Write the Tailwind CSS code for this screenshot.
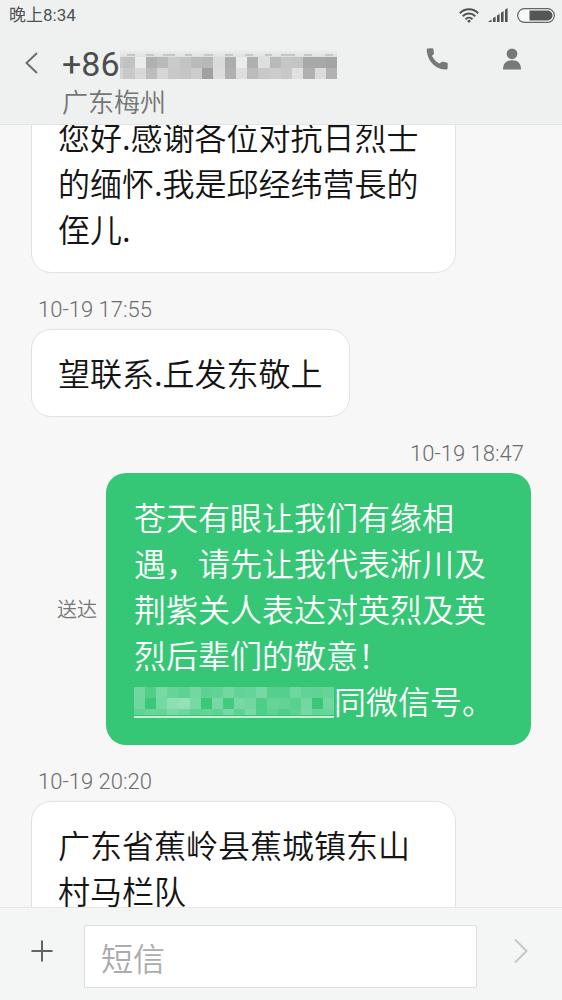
<!DOCTYPE html>
<html lang="zh-CN">
<head>
<meta charset="utf-8">
<meta name="viewport" content="width=device-width, initial-scale=1">
<title>短信</title>
<script src="https://cdn.jsdelivr.net/npm/@tailwindcss/browser@4"></script>
</head>
<body class="flex h-screen flex-col overflow-hidden bg-[#f7f7f7] font-['Noto_Sans_CJK_SC',sans-serif] font-[350] text-[#141414]">
<header class="shrink-0 border-b border-[#e4e5e5] bg-[#eff1f1]">
  <div class="flex h-[30px] items-center justify-between pr-[7px] pl-[9px] text-[#505252]">
    <span class="font-[Roboto,'Noto_Sans_CJK_SC',sans-serif] text-[17px] leading-[30px] font-normal">晚上8:34</span>
    <div class="flex items-center gap-[9px]">
      <svg class="h-[15px] w-[20px]" viewBox="0 0 20 15" fill="none" stroke="#505252" stroke-width="2" aria-label="Wi-Fi"><path d="M.8 5.2C5.8-.2 14.2-.2 19.2 5.2M3.7 8.2c3.5-3.6 9.1-3.6 12.6 0M6.5 11.2c2-2 5-2 7 0"/><circle cx="10" cy="13.2" r="1.4" fill="#505252" stroke="none"/></svg>
      <svg class="h-[14px] w-[20px]" viewBox="0 0 20 14" fill="#505252" aria-label="信号"><path d="M0 14l3.6-2.6V14zM5 10.2l2.6-1.6V14H5zM9 7.6L11.6 6v8H9zM13 4.7L15.6 3v11H13zM17 1.7L19.6 0v14H17z"/></svg>
      <svg class="h-[15px] w-[38px]" viewBox="0 0 38 15" aria-label="电量"><rect x=".7" y=".7" width="36.6" height="13.6" rx="6.8" fill="#f7f8f8" stroke="#626464" stroke-width="1.2"/><path d="M12.5 2.5H30.5a5 5 0 0 1 0 10H12.5z" fill="#555757"/></svg>
    </div>
  </div>
  <div class="flex h-[94px] items-start pr-[40px] pl-[24px]">
    <button class="mt-[20px] mr-[23px] flex h-[26px] w-[15px] items-center" aria-label="返回"><svg class="h-[22px] w-[15px]" viewBox="0 0 15 22" fill="none" stroke="#6c6e6e" stroke-width="2"><path d="M13 1L2.5 11 13 21"/></svg></button>
    <div class="flex-1 pt-[14px]">
      <h1 class="flex h-[40px] items-center font-[Roboto,'Noto_Sans_CJK_SC',sans-serif] text-[34px] leading-[40px] font-normal text-[#4c4e4e]">+86<svg class="h-[31px] w-[217px]" viewBox="0 0 217 31" shape-rendering="crispEdges" aria-label="号码已隐藏">
        <defs><linearGradient id="fade" x1="0" y1="0" x2="0" y2="1"><stop offset="0" stop-color="#eff1f1"/><stop offset="1" stop-color="#dcdddd"/></linearGradient></defs>
        <rect x="0" y="0" width="217" height="9" fill="url(#fade)"/>
        <g fill="#c6c7c7"><rect x="7" y="5" width="8" height="2"/><rect x="26" y="5" width="8" height="2"/><rect x="43" y="5" width="12" height="2"/><rect x="65" y="5" width="7" height="2"/><rect x="84" y="5" width="9" height="2"/><rect x="105" y="5" width="8" height="2"/><rect x="125" y="5" width="8" height="2"/><rect x="145" y="5" width="7" height="2"/><rect x="161" y="5" width="14" height="2"/><rect x="184" y="5" width="8" height="2"/><rect x="205" y="5" width="8" height="2"/></g>
        <g id="mosaic-header"></g>
      </svg></h1>
      <p class="text-[26px] leading-[34px] text-[#747676]">广东梅州</p>
    </div>
    <button class="mt-[18px] mr-[54px]" aria-label="拨打电话"><svg class="h-[22px] w-[22px]" viewBox="0 0 22 22" fill="#777979"><path d="M.8 1.4Q.8.6 1.6.5L6.2.2Q7.200.2 7.4 1.200L8 5.3Q8 6 7.3 6.500L6 7.700C7.200 10.800 10.600 14.300 13.800 15.600L15.200 14.200Q15.700 13.700 16.400 13.800L20.800 14.400Q21.700 14.600 21.700 15.600V20.200Q21.600 21.300 20.500 21.400C9.500 22.200.6 12 .8 1.400z"/></svg></button>
    <button class="mt-[18px]" aria-label="联系人"><svg class="h-[22px] w-[20px]" viewBox="0 0 20 22" fill="#777979"><circle cx="10" cy="5.8" r="5.4"/><path d="M1 21.500C1 15.500 4 12.300 10 12.300s9 3.200 9 9.200z"/></svg></button>
  </div>
</header>

<main class="min-h-0 flex-1 overflow-hidden px-[31px]">
  <ol class="-mt-[32px] flex flex-col gap-[23px] text-[32px] leading-[46px]">
    <li class="flex">
      <p class="max-w-[85%] rounded-[20px] border border-[#e2e2e2] bg-white px-[26px] pt-[19px] pb-[21px]">您好.感谢各位对抗日烈士的缅怀.我是邱经纬营長的侄儿.</p>
    </li>
    <li class="flex flex-col items-start gap-[5px]">
      <time class="px-[7px] font-[Roboto,sans-serif] text-[22px] leading-[28px] text-[#6c6c6c]">10-19 17:55</time>
      <p class="max-w-[85%] rounded-[20px] border border-[#e2e2e2] bg-white px-[26px] pt-[19px] pb-[21px]">望联系.丘发东敬上</p>
    </li>
    <li class="flex flex-col items-end gap-[5px]">
      <time class="px-[7px] font-[Roboto,sans-serif] text-[22px] leading-[28px] text-[#6c6c6c]">10-19 18:47</time>
      <div class="flex w-full items-center justify-end gap-[9px]">
        <span class="shrink-0 text-[20px] leading-[28px] text-[#777]">送达</span>
        <p class="w-[85%] rounded-[20px] bg-[#36c776] px-[28px] pt-[20px] pb-[22px] text-white">苍天有眼让我们有缘相遇，请先让我代表淅川及荆紫关人表达对英烈及英烈后辈们的敬意！<a href="#" class="inline-block border-b-2 border-[#c5efd7] align-[-4px]" aria-label="号码已隐藏"><svg class="h-[29px] w-[200px]" viewBox="0 0 200 29" shape-rendering="crispEdges"><g id="mosaic-message"></g></svg></a>同微信号。</p>
      </div>
    </li>
    <li class="flex flex-col items-start gap-[5px]">
      <time class="px-[7px] font-[Roboto,sans-serif] text-[22px] leading-[28px] text-[#6c6c6c]">10-19 20:20</time>
      <p class="max-w-[85%] rounded-[20px] border border-[#e2e2e2] bg-white px-[26px] pt-[19px] pb-[21px]">广东省蕉岭县蕉城镇东山村马栏队</p>
    </li>
  </ol>
</main>

<footer class="shrink-0 border-t border-[#e6e8e8] bg-[#f4f6f6]">
  <form class="flex items-start pt-[17px] pr-[33px] pb-[12px] pl-[31px]">
    <button type="button" class="mr-[31px] flex h-[52px] w-[22px] items-center justify-center" aria-label="添加"><svg class="h-[22px] w-[22px]" viewBox="0 0 22 22" stroke="#626464" stroke-width="2"><path d="M11 .5v21M.5 11h21"/></svg></button>
    <input type="text" aria-label="短信" placeholder="短信" class="h-[63px] min-w-0 flex-1 rounded-[2px] border border-[#dcdede] bg-white px-[16px] text-[32px] leading-[46px] outline-none placeholder:text-[#acacac]">
    <button type="submit" class="ml-[36px] flex h-[52px] w-[16px] items-center justify-center" aria-label="发送"><svg class="h-[26px] w-[16px]" viewBox="0 0 16 26" fill="none" stroke="#c6c8c8" stroke-width="2"><path d="M2 1.5L13.5 13 2 24.500"/></svg></button>
  </form>
</footer>

<script>
// Fills a group with square cells; each row is [top, height, colours].
function mosaic(id, left, step, rows) {
  const g = document.getElementById(id);
  rows.forEach(([y, h, colours]) => colours.split(' ').forEach((c, i) => {
    const r = document.createElementNS('http://www.w3.org/2000/svg', 'rect');
    r.setAttribute('x', left + i * step);
    r.setAttribute('y', y);
    r.setAttribute('width', step);
    r.setAttribute('height', h);
    r.setAttribute('fill', '#' + c);
    g.appendChild(r);
  }));
}
mosaic('mosaic-header', -8, 11.25, [
  [8, 11, 'c8c8c8 c2c2c2 ebebeb b0b0b0 b9b9b9 cacaca c4c4c4 bababa b8b8b8 dadada acacac ebebeb b0b0b0 dedede b9b9b9 c6c6c6 c4c4c4 a8a8a8 a8a8a8 a4a4a4'],
  [19, 11, 'd4d4d4 c8c8c8 d8d8d8 bcbcbc d6d6d6 c8c8c8 c5c5c5 cccccc a0a0a0 dcdcdc b0b0b0 dedede bbbbbb c8c8c8 cccccc c8c8c8 e0e0e0 b0b0b0 dcdcdc b2b2b2']
]);
mosaic('mosaic-message', 0, 11.12, [
  [0, 11, '72d69f 50cf89 78d9a5 66d499 5dd293 74d7a1 5ed294 62d396 74d7a1 62d396 66d499 78d8a5 55d08c 55d08c 70d69f 62d396 60d295 66d499'],
  [11, 11, '70d59e 38c878 74d9a4 8ddfb4 94e1b8 78d9a6 3bc978 78d8a5 42ca7f 78d8a5 72d69f 4bce86 66d397 62d295 58d18e 74d7a2 38c878 72d69f'],
  [22, 6, '60d294 6ad49a 66d397 7ad9a6 70d69f 5ed293 66d397 5ed293 78d8a5 5ed293 7ad9a6 4ece88 5ed293 4ece88 5ed293 78d8a5 66d397 6ad49a']
]);
</script>
</body>
</html>
